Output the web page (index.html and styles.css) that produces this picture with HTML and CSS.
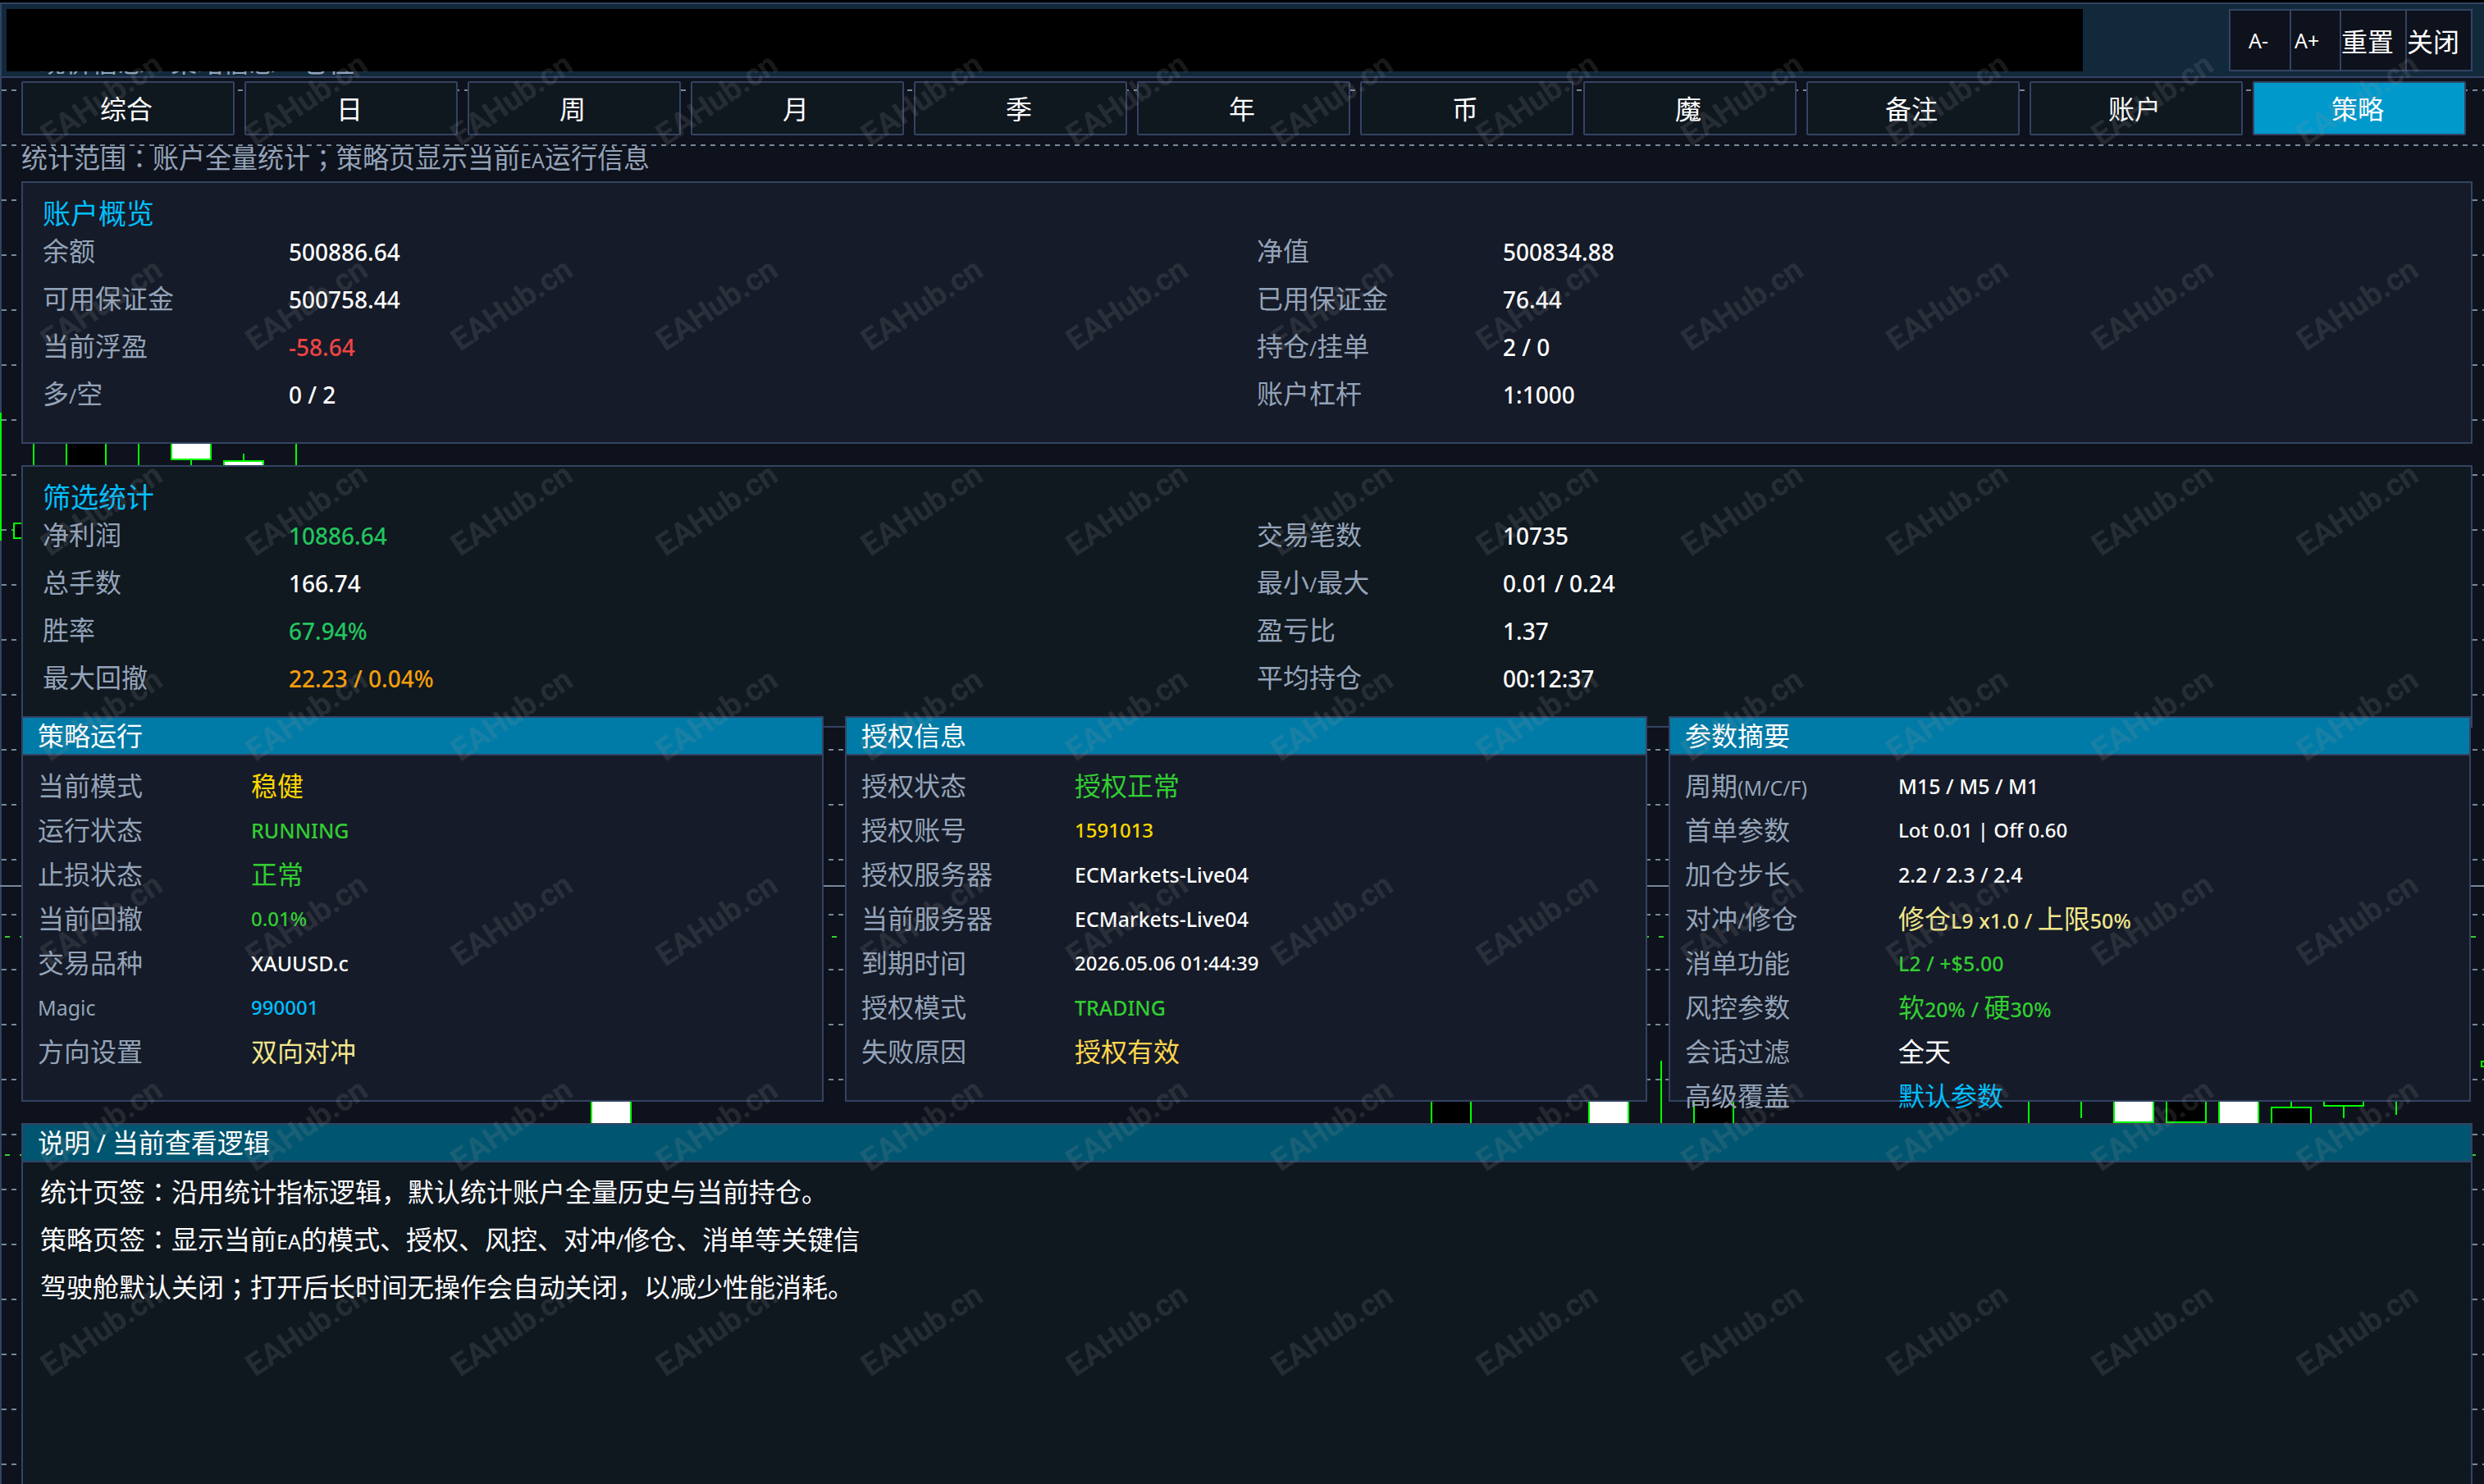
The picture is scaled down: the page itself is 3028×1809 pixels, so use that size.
FILE: index.html
```html
<!DOCTYPE html>
<html lang="zh-CN">
<head>
	<meta charset="UTF-8">
	<title>EA 驾驶舱</title>
	<link rel="stylesheet" href="styles.css">
</head>
<body>

	<!-- price chart behind the panels -->
	<svg class="chart" aria-hidden="true">
		<defs>
			<pattern id="grid" x="0" y="109" width="12" height="67" patternUnits="userSpaceOnUse">
				<rect x="2" y="0" width="6" height="2" fill="#778899"/>
			</pattern>
		</defs>
		<rect x="0" y="109" width="100%" height="100%" fill="url(#grid)"/>
		<path d="M0 1080H6000" stroke="#778899" stroke-width="2"/>
		<path d="M6 1142H6000M6 1408H6000" stroke="#32cd32" stroke-width="2" stroke-dasharray="6 12"/>
		<g stroke="#00ff00" stroke-width="2">
			<path d="M1 503V659M41 541V567M169 541V567M233 561V567M297 553V561M361 541V567"/>
			<rect x="81" y="521" width="48" height="60" fill="#000"/>
			<rect x="209" y="521" width="48" height="39" fill="#fff"/>
			<rect x="273" y="562" width="48" height="20" fill="#fff"/>
			<rect x="17" y="638" width="48" height="18" fill="#000"/>
			<path d="M2025 1293V1369M2473 1340V1369M2537 1340V1363M2793 1340V1349M2857 1349V1363M2921 1340V1359"/>
			<rect x="721" y="1330" width="48" height="50" fill="#fff"/>
			<rect x="1745" y="1330" width="48" height="50" fill="#000"/>
			<rect x="1937" y="1330" width="48" height="50" fill="#fff"/>
			<rect x="2065" y="1330" width="48" height="50" fill="#000"/>
			<rect x="2577" y="1330" width="48" height="38" fill="#fff"/>
			<rect x="2641" y="1330" width="48" height="38" fill="#000"/>
			<rect x="2705" y="1330" width="48" height="50" fill="#fff"/>
			<rect x="2769" y="1350" width="48" height="30" fill="#000"/>
			<rect x="2833" y="1330" width="48" height="18" fill="#000"/>
			<rect x="3025" y="1294" width="48" height="6" fill="#000"/>
		</g>
	</svg>

	<div class="window">
		<header class="topbar">
			<div class="caption">
				<p><span>现价信息</span> <span>策略信息</span> <span>仓位</span></p>
			</div>
			<div class="tools">
				<button type="button" class="latin first">A-</button>
				<button type="button" class="latin">A+</button>
				<button type="button" class="wide">重置</button>
				<button type="button" class="wide">关闭</button>
			</div>
		</header>

		<nav class="tabs">
			<button type="button">综合</button>
			<button type="button">日</button>
			<button type="button">周</button>
			<button type="button">月</button>
			<button type="button">季</button>
			<button type="button">年</button>
			<button type="button">币</button>
			<button type="button">魔</button>
			<button type="button">备注</button>
			<button type="button">账户</button>
			<button type="button" class="active">策略</button>
		</nav>

		<p class="scope">统计范围<span class="mid" lang="zh-TW">：</span>账户全量统计<span class="mid" lang="zh-TW">；</span>策略页显示当前<span class="latin">EA</span>运行信息</p>

		<section class="stats">
			<h2>账户概览</h2>
			<dl>
				<div><dt>余额</dt><dd>500886.64</dd></div>
				<div><dt>净值</dt><dd>500834.88</dd></div>
				<div><dt>可用保证金</dt><dd>500758.44</dd></div>
				<div><dt>已用保证金</dt><dd>76.44</dd></div>
				<div><dt>当前浮盈</dt><dd class="loss">-58.64</dd></div>
				<div><dt>持仓<span class="latin">/</span>挂单</dt><dd>2 / 0</dd></div>
				<div><dt>多<span class="latin">/</span>空</dt><dd>0 / 2</dd></div>
				<div><dt>账户杠杆</dt><dd>1:1000</dd></div>
			</dl>
		</section>

		<section class="stats filter">
			<h2>筛选统计</h2>
			<dl>
				<div><dt>净利润</dt><dd class="profit">10886.64</dd></div>
				<div><dt>交易笔数</dt><dd>10735</dd></div>
				<div><dt>总手数</dt><dd>166.74</dd></div>
				<div><dt>最小<span class="latin">/</span>最大</dt><dd>0.01 / 0.24</dd></div>
				<div><dt>胜率</dt><dd class="profit">67.94%</dd></div>
				<div><dt>盈亏比</dt><dd>1.37</dd></div>
				<div><dt>最大回撤</dt><dd class="warn">22.23 / 0.04%</dd></div>
				<div><dt>平均持仓</dt><dd>00:12:37</dd></div>
			</dl>
		</section>

		<div class="columns">
			<section class="card">
				<h3>策略运行</h3>
				<dl>
					<div><dt>当前模式</dt><dd class="gold">稳健</dd></div>
					<div><dt>运行状态</dt><dd class="lime latin">RUNNING</dd></div>
					<div><dt>止损状态</dt><dd class="lime">正常</dd></div>
					<div><dt>当前回撤</dt><dd class="lime num">0.01%</dd></div>
					<div><dt>交易品种</dt><dd class="latin">XAUUSD.c</dd></div>
					<div><dt class="latin">Magic</dt><dd class="sky num">990001</dd></div>
					<div><dt>方向设置</dt><dd class="khaki">双向对冲</dd></div>
				</dl>
			</section>

			<section class="card">
				<h3>授权信息</h3>
				<dl>
					<div><dt>授权状态</dt><dd class="lime">授权正常</dd></div>
					<div><dt>授权账号</dt><dd class="gold num">1591013</dd></div>
					<div><dt>授权服务器</dt><dd class="latin">ECMarkets-Live04</dd></div>
					<div><dt>当前服务器</dt><dd class="latin">ECMarkets-Live04</dd></div>
					<div><dt>到期时间</dt><dd class="num">2026.05.06 01:44:39</dd></div>
					<div><dt>授权模式</dt><dd class="lime latin">TRADING</dd></div>
					<div><dt>失败原因</dt><dd class="amber">授权有效</dd></div>
				</dl>
			</section>

			<section class="card params">
				<h3>参数摘要</h3>
				<dl>
					<div><dt>周期<span class="latin">(M/C/F)</span></dt><dd class="latin">M15 / M5 / M1</dd></div>
					<div><dt>首单参数</dt><dd class="num">Lot 0.01 | Off 0.60</dd></div>
					<div><dt>加仓步长</dt><dd class="latin">2.2 / 2.3 / 2.4</dd></div>
					<div><dt>对冲<span class="latin">/</span>修仓</dt><dd class="khaki">修仓<span class="latin">L9 x1.0 / </span>上限<span class="latin">50%</span></dd></div>
					<div><dt>消单功能</dt><dd class="lime latin">L2 / +$5.00</dd></div>
					<div><dt>风控参数</dt><dd class="lime">软<span class="latin">20% / </span>硬<span class="latin">30%</span></dd></div>
					<div><dt>会话过滤</dt><dd>全天</dd></div>
					<div><dt>高级覆盖</dt><dd class="sky">默认参数</dd></div>
				</dl>
			</section>
		</div>

		<section class="card notes">
			<h3>说明<span class="sep"> / </span>当前查看逻辑</h3>
			<p>统计页签<span class="mid" lang="zh-TW">：</span>沿用统计指标逻辑，默认统计账户全量历史与当前持仓。</p>
			<p>策略页签<span class="mid" lang="zh-TW">：</span>显示当前<span class="latin">EA</span>的模式、授权、风控、对冲<span class="latin">/</span>修仓、消单等关键信</p>
			<p>驾驶舱默认关闭<span class="mid" lang="zh-TW">；</span>打开后长时间无操作会自动关闭，以减少性能消耗。</p>
		</section>
	</div>

	<svg class="watermark" aria-hidden="true">
		<defs>
			<pattern id="mark" x="30" y="-45" width="250" height="250" patternUnits="userSpaceOnUse">
				<text x="0" y="0" transform="translate(31 224) rotate(-34)">EAHub.cn</text>
			</pattern>
		</defs>
		<rect width="100%" height="100%" fill="url(#mark)"/>
	</svg>

</body>
</html>
```
FILE: styles.css
```css
* {
	box-sizing: border-box;
}

body {
	margin: 0;
	min-height: 100vh;
	border-top: 3px solid #000;
	background: #0e121c;
	color: #fff;
	font-family: "Noto Sans", "Noto Sans CJK SC", sans-serif;
	font-size: 32px;
	display: flex;
	overflow: hidden;
}

h2, h3, p, dl, dd {
	margin: 0;
	font-weight: normal;
}

button {
	font: inherit;
	color: inherit;
	padding: 0;
	background: #0f171f;
	border: 2px solid #334363;
	cursor: pointer;
}

.chart, .watermark {
	position: absolute;
	top: 0;
	left: 0;
	width: 100%;
	height: 100%;
	pointer-events: none;
}

.watermark text {
	font-family: Roboto, sans-serif;
	font-size: 38px;
	font-weight: 700;
	fill: rgba(150, 150, 150, 0.17);
}

.window {
	flex: 1;
	min-width: 0;
	display: flex;
	flex-direction: column;
	border: 2px solid #334363;
	border-width: 2px 0 0 2px;
}

.window > * {
	position: relative;
}

/* top bar */
.topbar {
	display: flex;
	padding: 6px 14px 6px 6px;
	background: #12293c;
	border-bottom: 2px solid #334363;
}

.caption {
	flex: 1;
	height: 76px;
	margin-right: 180px;
	background: #000;
}

/* the line runs under the black strip, only its lower edge shows */
.caption p {
	display: flex;
	gap: 32px;
	height: 80px;
	padding: 47px 0 0 40px;
	line-height: 36px;
	color: #94a3b8;
	clip-path: inset(76px 0 0 0);
}

.tools {
	display: flex;
}

.tools button {
	width: 62px;
	margin-left: -2px;
	background: #0e121c;
	text-align: left;
	white-space: nowrap;
}

.tools .latin {
	width: 63px;
	padding-left: 4px;
}

.tools .first {
	width: 76px;
	padding-left: 22px;
}

.tools .wide {
	width: 82px;
}

/* tabs */
.tabs {
	display: grid;
	grid-template-columns: repeat(11, 1fr);
	gap: 12px;
	margin-top: 4px;
	padding: 0 22px 0 24px;
}

.tabs button {
	height: 66px;
	padding: 0 4px 2px 0;
	border-radius: 2px;
}

.tabs .active {
	background: #0099cc;
}

.scope {
	height: 40px;
	margin: 8px 24px;
	line-height: 40px;
	color: #94a3b8;
}

.latin {
	font-size: 25px;
}

.num {
	font-size: 24px;
}

.sep {
	font-size: 30px;
	white-space: pre;
}

/* centred full-width punctuation */
.mid {
	font-family: "Noto Sans CJK TC", sans-serif;
	line-height: 1;
}

/* account panels */
.stats {
	margin: 0 14px 26px 24px;
	padding: 18px 0 30px 24px;
	background: #151b28;
	border: 2px solid #334363;
}

.stats h2 {
	height: 36px;
	font-size: 34px;
	line-height: 38px;
	color: #00bfff;
}

.stats dl {
	display: grid;
	grid-template-columns: 1fr 1fr;
}

.stats dl div {
	display: flex;
	height: 58px;
	line-height: 58px;
}

.stats dt {
	width: 300px;
}

.stats dd {
	font-size: 28px;
	line-height: 60px;
}

.stats dd, dd.latin, dd.num, dd .latin {
	font-weight: 500;
}

.filter {
	margin-bottom: -14px;
	background: #101820;
}

dt {
	color: #94a3b8;
}

/* strategy cards */
.columns {
	display: grid;
	grid-template-columns: repeat(3, 1fr);
	gap: 26px;
	margin: 0 16px 26px 24px;
}

.card {
	background: #151b28;
	border: 2px solid #334363;
}

.card h3 {
	height: 46px;
	padding-left: 18px;
	font-size: 32px;
	line-height: 44px;
	background: #007ba7;
	border-bottom: 2px solid #334363;
}

.card dl {
	padding: 10px 18px 32px;
}

.card dl div {
	display: flex;
	height: 54px;
	line-height: 54px;
	white-space: nowrap;
}

.card dt {
	width: 260px;
}

/* the last parameter hangs over the card's lower edge */
.params dl div:last-child {
	margin-bottom: -54px;
}

.notes {
	flex: 1;
	margin: 0 14px 0 24px;
	background: #0f171f;
	border-bottom: 0;
}

.notes h3 {
	margin-bottom: 8px;
	background: #005570;
}

.notes p {
	height: 58px;
	padding-left: 21px;
	line-height: 56px;
}

/* value colours */
.loss { color: #ef4444; }
.profit { color: #22c55e; }
.warn { color: #f59e0b; }
.lime { color: #32cd32; }
.gold { color: #ffd700; }
.amber { color: #ffd54f; }
.khaki { color: #f0e68c; }
.sky { color: #00bfff; }
```
